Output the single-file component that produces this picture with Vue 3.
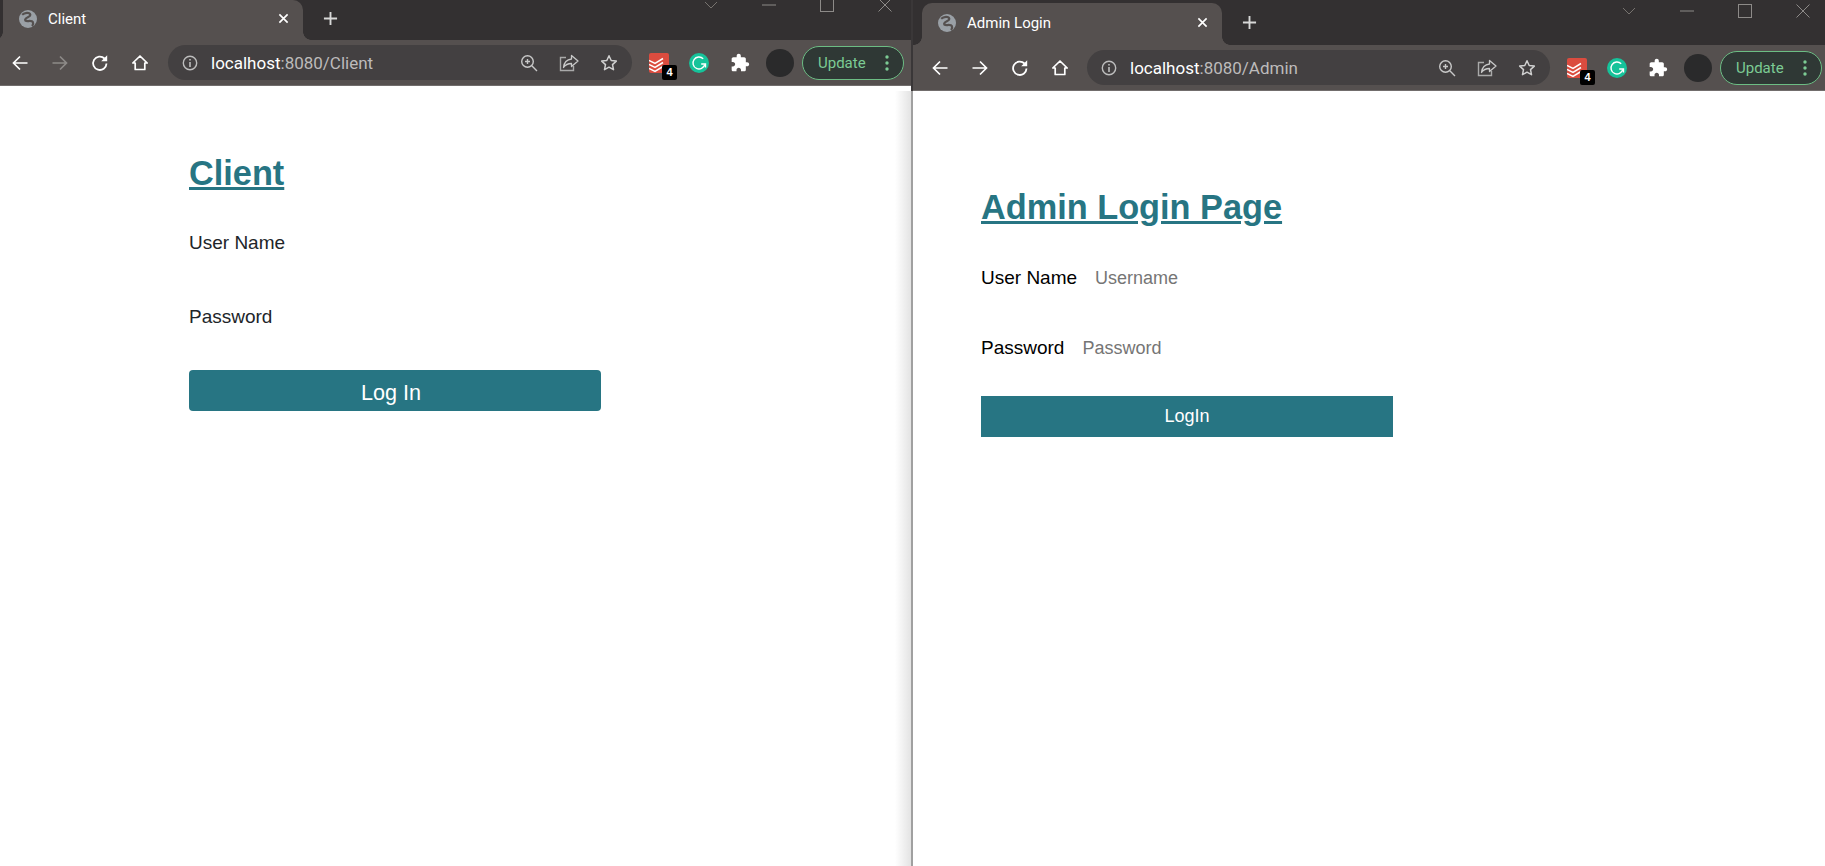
<template>
  <div class="desktop">
    <section v-for="win in windows" :key="win.url" class="window" :class="win.cls">
      <header class="chrome">
        <div class="tabstrip">
          <div class="tab">
            <svg class="favicon" viewBox="0 0 16 16">
              <circle cx="8" cy="8" r="8" fill="#9aa0a6" />
              <path d="M2.800 4.200C5 2.200 9.500 1.800 10 4 10.400 6.500 6 6.200 5.500 8.500 5.200 10.800 9.500 9.200 11.500 10 13 10.800 12.800 13 11.500 14.200" fill="none" stroke="#55504f" stroke-width="2" />
            </svg>
            <span class="tab-title">{{ win.title }}</span>
            <svg class="tab-close" viewBox="0 0 12 12">
              <path d="M1.500 1.500l9 9M10.500 1.500l-9 9" stroke="#fff" stroke-width="1.800" fill="none" />
            </svg>
          </div>
          <svg class="new-tab" viewBox="0 0 16 16">
            <path d="M8 1v14M1 8h14" stroke="#d8d8d8" stroke-width="2" fill="none" />
          </svg>
          <div class="caption">
            <svg viewBox="0 0 14 8" class="cap-chevron"><path d="M1 1l6 6 6-6" stroke="#77736f" fill="none" /></svg>
            <svg viewBox="0 0 14 14" class="cap-btn"><path d="M0 7h14" stroke="#8d8a88" fill="none" /></svg>
            <svg viewBox="0 0 14 14" class="cap-btn"><rect x=".5" y=".5" width="13" height="13" stroke="#8d8a88" fill="none" /></svg>
            <svg viewBox="0 0 14 14" class="cap-btn"><path d="M.5.5l13 13M13.500.5l-13 13" stroke="#8d8a88" fill="none" /></svg>
          </div>
        </div>
        <div class="toolbar">
          <svg class="nav" viewBox="0 0 18 18"><path d="M16.500 9H2.500M9 2.500L2.500 9 9 15.500" fill="none" stroke="#fff" stroke-width="1.700" /></svg>
          <svg class="nav" viewBox="0 0 18 18"><path d="M1.500 9h14M9 2.500L15.500 9 9 15.500" fill="none" :stroke="win.forward" stroke-width="1.700" /></svg>
          <svg class="nav" viewBox="0 0 18 18"><path d="M15.500 9.500A6.700 6.700 0 1 1 13.500 4.500" fill="none" stroke="#fff" stroke-width="1.800" /><path d="M16.200 1.200v6h-6z" fill="#fff" /></svg>
          <svg class="nav" viewBox="0 0 18 18"><path d="M9 2L1.800 9h2.400v6.500h9.600V9h2.400z" fill="none" stroke="#fff" stroke-width="1.700" stroke-linejoin="round" /></svg>
          <div class="omnibox">
            <svg class="info" viewBox="0 0 16 16">
              <circle cx="8" cy="8" r="6.700" fill="none" stroke="#bdbdbd" stroke-width="1.400" />
              <path d="M8 7v5M8 4v1.600" stroke="#bdbdbd" stroke-width="1.600" />
            </svg>
            <span class="url"><b>localhost</b>{{ win.path }}</span>
            <svg class="omni-icon" viewBox="0 0 18 18"><circle cx="7.500" cy="7.500" r="5.800" fill="none" stroke="#c8c8c8" stroke-width="1.400" /><path d="M11.800 11.800L17 17M7.500 5v5M5 7.500h5" stroke="#c8c8c8" stroke-width="1.400" fill="none" /></svg>
            <svg class="omni-icon share" viewBox="0 0 20 18"><path d="M7 3.500H1.500v13h13V12" fill="none" stroke="#a9a9a9" stroke-width="1.400" /><path d="M12.500 1.500L19 7l-6.500 5.500V9.500C9 9.500 6.500 10.500 4.500 13.500 5 9 8 5.500 12.500 5z" fill="none" stroke="#c8c8c8" stroke-width="1.300" stroke-linejoin="round" /></svg>
            <svg class="omni-icon" viewBox="0 0 18 18"><path d="M9 1.800l2.200 4.700 5.100.6-3.800 3.500 1 5.100L9 13.200l-4.500 2.500 1-5.100L1.700 7.100l5.100-.6z" fill="none" stroke="#d0d0d0" stroke-width="1.500" stroke-linejoin="round" /></svg>
          </div>
          <div class="todoist">
            <svg viewBox="0 0 20 20" class="todoist-icon">
              <rect width="20" height="20" rx="2" fill="#db4c3f" />
              <path d="M0 7.500l6 3 8-5M0 11.500l6 3 8-5M0 15.500l6 3 8-5" fill="none" stroke="#fff" stroke-width="1.500" />
            </svg>
            <span class="badge">4</span>
          </div>
          <svg class="grammarly" viewBox="0 0 20 20">
            <circle cx="10" cy="10" r="10" fill="#15c39a" />
            <path d="M14.200 5.700A6 6 0 1 0 15.800 11.500" fill="none" stroke="#fff" stroke-width="1.400" />
            <path d="M12.200 11h4.300V14.500" fill="none" stroke="#fff" stroke-width="1.400" />
          </svg>
          <svg class="puzzle" viewBox="0 0 24 24">
            <path d="M20.500 11H19V7c0-1.100-.9-2-2-2h-4V3.500C13 2.120 11.880 1 10.500 1S8 2.120 8 3.500V5H4c-1.100 0-1.990.9-1.990 2v3.800H3.500c1.490 0 2.700 1.210 2.700 2.700s-1.210 2.700-2.700 2.700H2V20c0 1.100.9 2 2 2h3.800v-1.500c0-1.490 1.210-2.700 2.700-2.700 1.490 0 2.700 1.210 2.700 2.700V22H17c1.100 0 2-.9 2-2v-4h1.500c1.380 0 2.500-1.120 2.500-2.500S21.880 11 20.500 11z" fill="#fff" />
          </svg>
          <div class="avatar"></div>
          <div class="update">
            <span>Update</span>
            <svg viewBox="0 0 4 16" class="dots"><circle cx="2" cy="2" r="1.700" /><circle cx="2" cy="8" r="1.700" /><circle cx="2" cy="14" r="1.700" /></svg>
          </div>
        </div>
      </header>
      <main class="page">
        <h2 class="heading">{{ win.heading }}</h2>
        <div class="field">
          <label>User Name</label>
          <input v-if="win.placeholders" class="box" type="text" placeholder="Username" />
        </div>
        <div class="field">
          <label>Password</label>
          <input v-if="win.placeholders" class="box" type="password" placeholder="Password" />
        </div>
        <button class="submit">{{ win.button }}</button>
      </main>
    </section>
  </div>
</template>

<script setup>
const windows = [
  {
    cls: "client",
    title: "Client",
    path: ":8080/Client",
    heading: "Client",
    button: "Log In",
    forward: "#8d8a88",
    placeholders: false,
  },
  {
    cls: "admin",
    title: "Admin Login",
    path: ":8080/Admin",
    heading: "Admin Login Page",
    button: "LogIn",
    forward: "#ffffff",
    placeholders: true,
  },
];
</script>

<style>
html,
body {
  margin: 0;
  background: #fff;
}
</style>

<style scoped>
.desktop {
  display: flex;
  height: 866px;
  width: 1825px;
  overflow: hidden;
  font-family: "Liberation Sans", Arial, sans-serif;
}

.window {
  display: flex;
  flex-direction: column;
  min-width: 0;
}

.window.client {
  width: 911px;
}

.window.admin {
  flex: 1;
}

.chrome {
  background: #333031;
  flex: none;
}

.admin .chrome {
  padding-top: 3px;
  border-left: 2px solid #3a3738;
}

.tabstrip {
  display: flex;
  align-items: center;
  height: 40px;
  padding-left: 3px;
  position: relative;
}

.admin .tabstrip {
  height: 42px;
  padding-left: 9px;
}

.tab {
  position: relative;
  display: flex;
  align-items: center;
  width: 300px;
  height: 100%;
  padding: 0 14px 3px 16px;
  box-sizing: border-box;
  background: #55504f;
  border-radius: 10px 10px 0 0;
  color: #fff;
  font: 15px "Roboto", "Liberation Sans", sans-serif;
}

.client .tab {
  border-radius: 0 10px 0 0;
}

/* curved feet of the active tab */
.tab::before,
.tab::after {
  content: "";
  position: absolute;
  bottom: 0;
  width: 8px;
  height: 8px;
}

.tab::before {
  left: -8px;
  background: radial-gradient(circle at 0 0, transparent 7.500px, #55504f 8px);
}

.tab::after {
  right: -8px;
  background: radial-gradient(circle at 100% 0, transparent 7.500px, #55504f 8px);
}

.favicon {
  width: 18px;
  height: 18px;
  margin-right: 11px;
  flex: none;
}

.tab-title {
  flex: 1;
}

.tab-close {
  width: 11px;
  height: 11px;
}

.new-tab {
  width: 15px;
  height: 15px;
  margin-left: 20px;
  margin-bottom: 3px;
}

.caption {
  position: absolute;
  top: -2px;
  right: 0;
  display: flex;
  align-items: center;
  gap: 44px;
  padding-right: 19px;
}

.admin .caption {
  top: 1px;
  padding-right: 15px;
}

.cap-chevron {
  width: 14px;
  height: 8px;
}

.cap-btn {
  width: 14px;
  height: 14px;
}

.toolbar {
  display: flex;
  align-items: center;
  height: 45px;
  padding: 0 7px 0 11px;
  background: #55504f;
  border-bottom: 1px solid #716d6c;
}

.admin .toolbar {
  padding: 0 3px 0 18px;
}

.nav {
  width: 18px;
  height: 18px;
  margin-right: 22px;
  flex: none;
}

.omnibox {
  flex: 1;
  display: flex;
  align-items: center;
  height: 35px;
  margin-left: -3px;
  margin-right: 17px;
  padding: 0 14px 0 14px;
  border-radius: 18px;
  background: #434041;
  gap: 21px;
  min-width: 0;
}

.admin .omnibox {
  margin-left: -4px;
}

.info {
  width: 16px;
  height: 16px;
  margin-right: -8px;
  flex: none;
}

.url {
  flex: 1;
  font: 17px "Roboto", "Liberation Sans", sans-serif;
  color: #bdbbbb;
}

.url b {
  font-weight: 400;
  color: #fff;
}

.omni-icon {
  width: 18px;
  height: 18px;
  flex: none;
}

.omni-icon.share {
  width: 20px;
}

.todoist {
  position: relative;
  width: 20px;
  height: 20px;
  margin-right: 20px;
  flex: none;
}

.todoist-icon {
  width: 20px;
  height: 20px;
  display: block;
}

.badge {
  position: absolute;
  right: -8px;
  bottom: -7px;
  width: 15px;
  height: 15px;
  border-radius: 2px;
  background: #000;
  color: #fff;
  font: bold 11px/15px "Liberation Sans", sans-serif;
  text-align: center;
}

.grammarly {
  width: 20px;
  height: 20px;
  margin-right: 21px;
  flex: none;
}

.puzzle {
  width: 20px;
  height: 20px;
  margin-right: 16px;
  flex: none;
}

.avatar {
  width: 28px;
  height: 28px;
  margin-right: 8px;
  border-radius: 50%;
  background: #2a2a2b;
  flex: none;
}

.update {
  display: flex;
  align-items: center;
  justify-content: space-between;
  width: 102px;
  height: 34px;
  padding: 0 14px 0 15px;
  box-sizing: border-box;
  border: 1px solid #6cbd84;
  border-radius: 17px;
  background: #2f3835;
  color: #7ccb94;
  font: 15px "Roboto", "Liberation Sans", sans-serif;
  flex: none;
}

.dots {
  width: 4px;
  height: 16px;
  fill: #7ccb94;
}

.page {
  position: relative;
  flex: 1;
  background: #fff;
  display: flex;
  flex-direction: column;
  align-items: flex-start;
}

.client .page {
  padding: 67px 0 0 189px;
}

.admin .page {
  padding: 96px 0 0 68px;
  border-left: 2px solid #a0a0a0;
}

/* window drop shadow over the left browser */
.admin .page::before {
  content: "";
  position: absolute;
  top: 0;
  bottom: 0;
  left: -18px;
  width: 16px;
  background: linear-gradient(to right, rgba(0, 0, 0, 0), rgba(0, 0, 0, 0.11));
}

.heading {
  margin: 0;
  color: #277583;
  font-size: 34.300px;
  line-height: 41px;
  font-weight: 700;
  text-decoration: underline;
}

.field {
  display: flex;
  align-items: center;
  color: #212529;
  font-size: 19px;
  line-height: 24px;
  height: 24px;
}

.client .field {
  margin-top: 37px;
}

.client .field + .field {
  margin-top: 50px;
}

.admin .field {
  margin-top: 38px;
  color: #000;
}

.admin .field + .field {
  margin-top: 46px;
}

.box {
  border: 0;
  outline: 0;
  padding: 0;
  margin-left: 18px;
  width: 200px;
  background: transparent;
  font: 18px "Liberation Sans", sans-serif;
}

.box::placeholder {
  color: #757575;
}

.submit {
  width: 412px;
  height: 41px;
  border: 0;
  background: #277583;
  color: #fff;
  font-family: "Liberation Sans", Arial, sans-serif;
}

.client .submit {
  margin-top: 41px;
  border-radius: 4px;
  font-size: 21.600px;
  padding: 4px 8px 0 0;
}

.admin .submit {
  margin-top: 36px;
  font-size: 18px;
}
</style>
